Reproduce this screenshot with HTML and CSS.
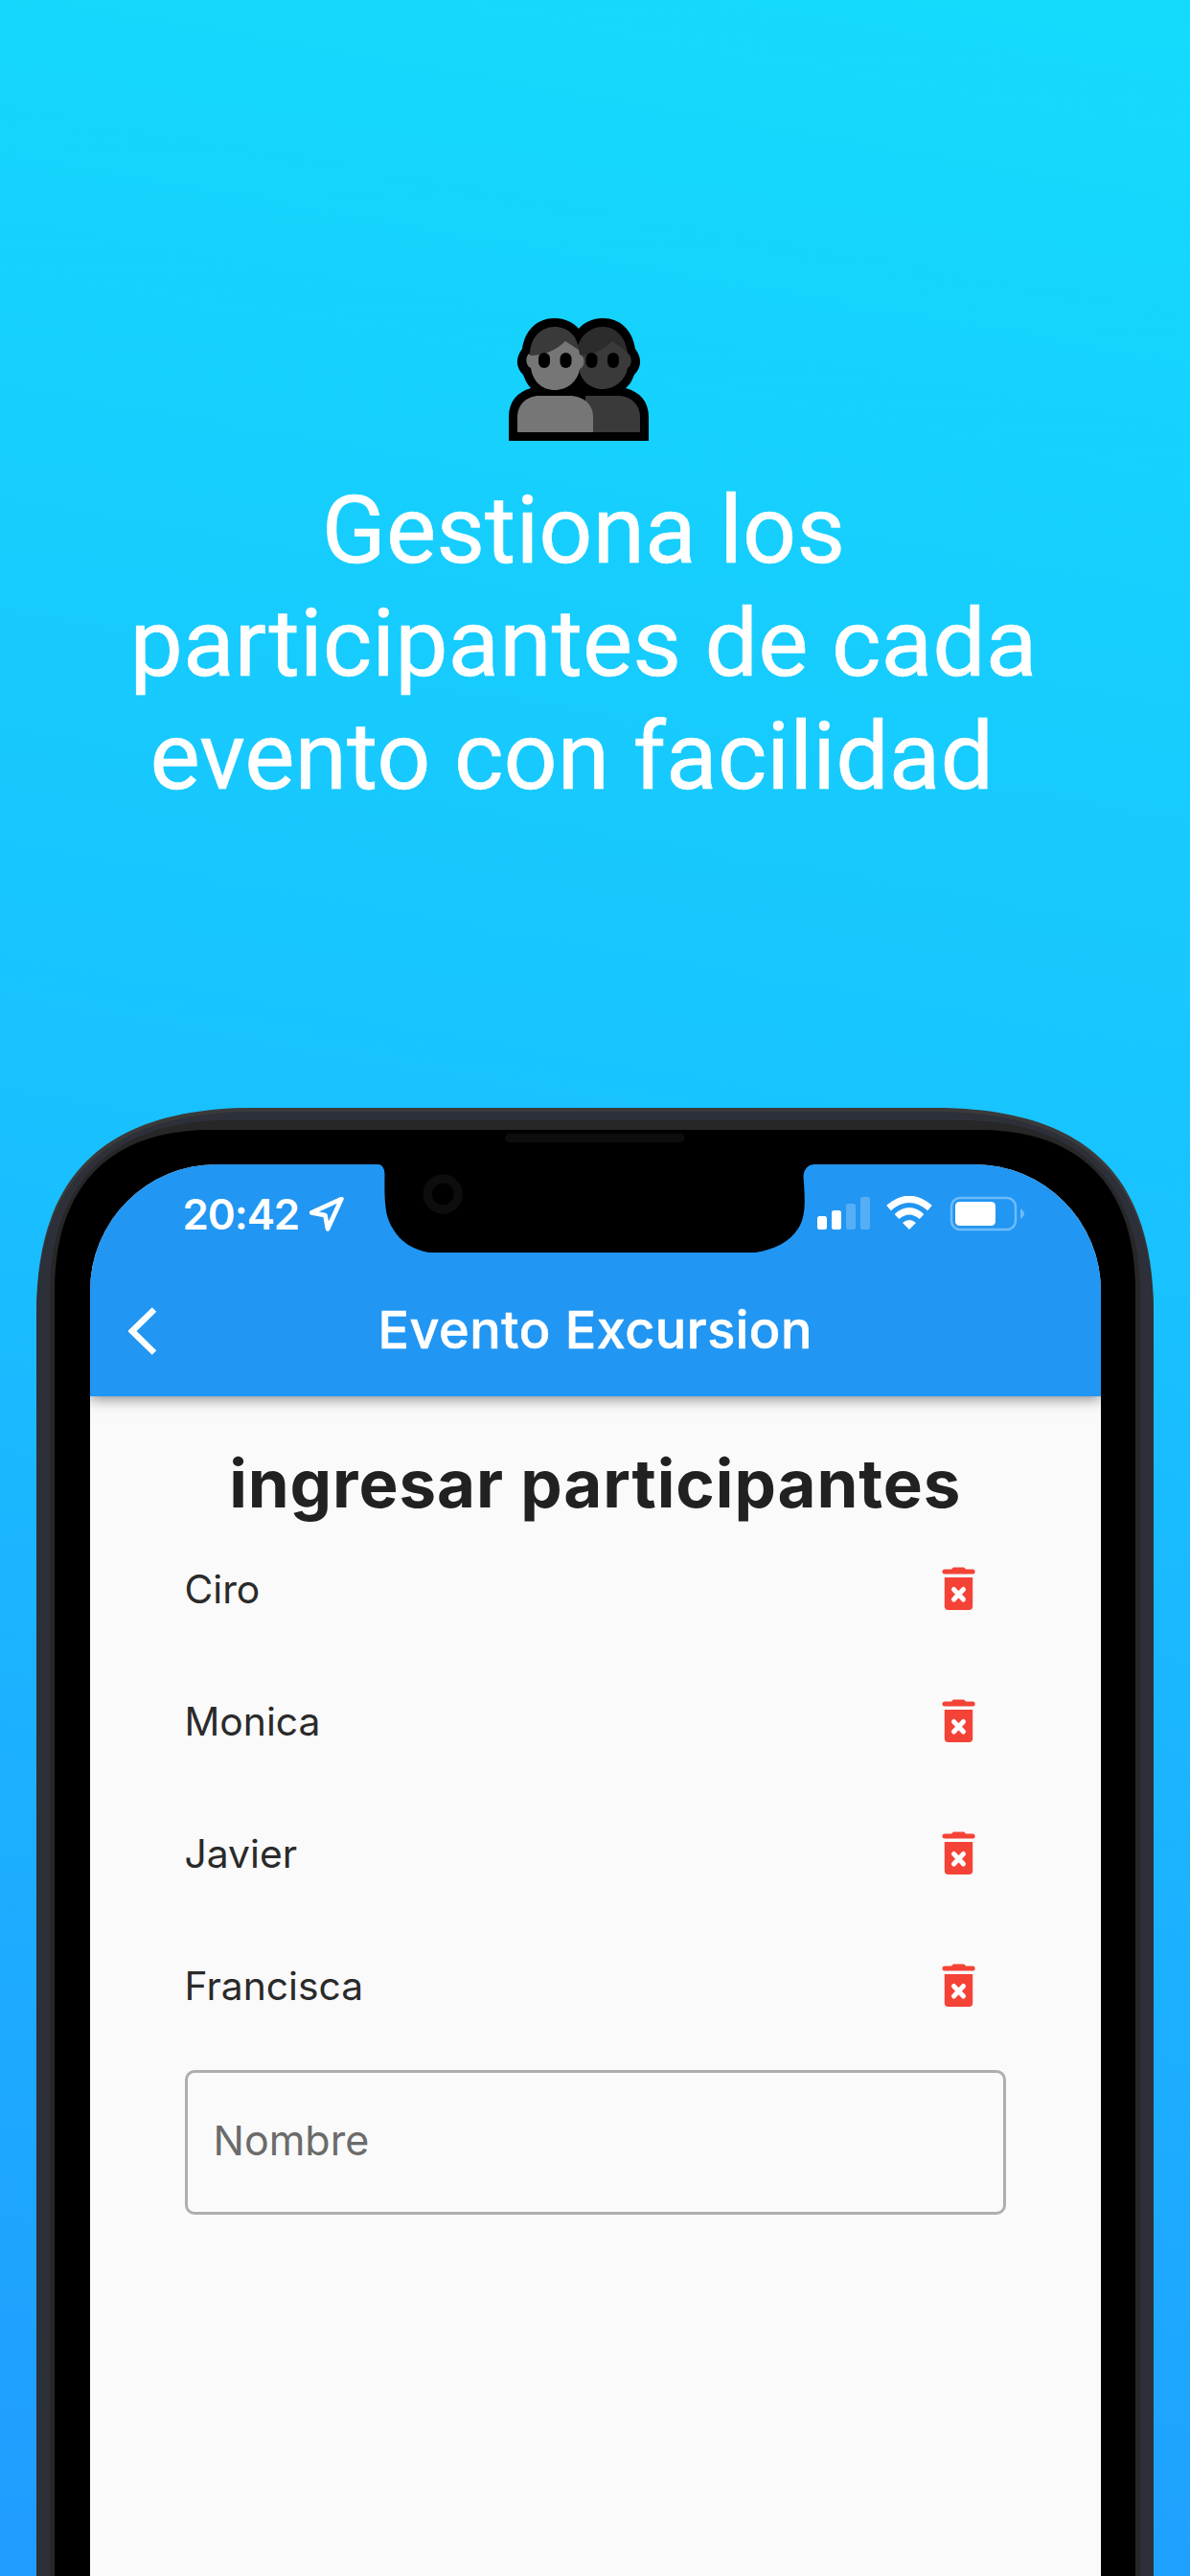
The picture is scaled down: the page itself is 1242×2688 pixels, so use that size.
FILE: index.html
```html
<!DOCTYPE html>
<html lang="es">
<head>
  <meta charset="UTF-8" />
  <title>Evento Excursion</title>
  <link rel="stylesheet" href="styles.css">
</head>
<body>
  <svg width="0" height="0" class="defs">
    <symbol id="trash" viewBox="0 0 36 46">
      <path d="M3 2.600h7L12 .5h11l2.200 2.100h7a2.500 2.500 0 0 1 0 5H3a2.500 2.500 0 0 1 0-5z" />
      <path d="M2.800 11h29.400v30a4 4 0 0 1-4 4H6.800a4 4 0 0 1-4-4z" />
      <path d="M12.500 23.500l10 10.500M22.500 23.500l-10 10.500" stroke="#fff" stroke-width="5" stroke-linecap="round" />
    </symbol>
  </svg>

  <header class="hero">
    <svg class="people" viewBox="0 0 146 128">
      <path d="M0 128v-25c0-16 9-26 23-30-4-4-6-9-8-14-8-8-8-18-1-27C17 12 30 0 48 0c10 0 19 4 25 11C79 4 88 0 98 0c18 0 31 12 34 32 7 9 7 19-1 27-2 5-4 10-9 14 15 4 24 14 24 30v25z" />
      <path fill="#3a3a3a" d="M80 81h34c14 0 23 10 23 22v16H80z" />
      <path fill="#767676" d="M9 119v-16c0-12 9-22 23-22h31c16 0 25 10 25 22v16z" />
      <path fill="#3a3a3a" d="M72 37L108 20l16 15v2c5 1 5 13 0 15-2 13-14 22-26 22S75 66 73 52z" />
      <path fill="#2c2c2c" d="M72 39v-10C76 16 87 9 98 9c13 0 24 10 26 27L108 24C99 33 86 39 72 39z" />
      <path fill="#767676" d="M22 37L59 22l14 11 1 5c6 1 6 13 0 15-2 13-13 22-26 22S25 66 23 52c-6-2-6-14-1-15z" />
      <path fill="#3a3a3a" d="M22 39C22 21 33 9 48 9c13 0 24 9 25 24L59 24C50 33 37 39 22 39z" />
      <g>
        <rect x="31" y="36" width="12" height="16" rx="6" /><rect x="53.500" y="36" width="12" height="16" rx="6" />
        <rect x="80.500" y="36" width="12" height="16" rx="6" /><rect x="103" y="36" width="12" height="16" rx="6" />
      </g>
    </svg>
    <h1>Gestiona los<br>participantes de cada<br>evento con facilidad&nbsp;</h1>
  </header>

  <main class="phone">
    <!-- marco del telefono -->
    <svg class="frame" viewBox="0 0 1166 1532">
      <path fill="#3a3a3a" d="M0 1532V214C0 68 73 0 229 0H937C1093 0 1166 68 1166 214V1532z" />
      <path fill="#2d3039" d="M0 1532V218C0 68 80 4 229 4H937C1086 4 1166 68 1166 218V1532z" />
      <path fill="#272727" d="M14 1532V194C14 74 84 13 200 13H966C1082 13 1152 74 1152 194V1532z" />
      <path d="M19 1532V191C19 79 79 23 182 23H984C1087 23 1147 79 1147 191V1532z" />
    </svg>

    <div class="screen">
      <div class="top">
        <div class="status">
          <span class="time">20:42</span>
          <svg class="arrow" viewBox="0 0 34 34"><path d="M31.500 2L2 15.500l13.500 2.500L18 31.500z" /></svg>
          <svg class="signals" viewBox="0 0 220 38">
            <g fill="#fff">
              <rect x="1" y="21" width="10" height="14" rx="2.500" />
              <rect x="16" y="15" width="10" height="20" rx="2.500" />
              <rect x="31" y="8" width="10" height="27" rx="2.500" opacity=".24" />
              <rect x="46" y="1" width="10" height="34" rx="2.500" opacity=".24" />
            </g>
            <g fill="none" stroke="#fff" stroke-width="7">
              <path d="M75.500 12.500Q97-6 118.500 12.500" />
              <path d="M84 21.500Q97 10 110 21.500" />
            </g>
            <path fill="#fff" d="M90 28Q97 22 104 28L97 35z" />
            <rect x="141" y="2" width="67" height="33" rx="9" fill="none" stroke="#6dbcfa" stroke-width="2.500" />
            <rect x="145" y="6" width="42" height="25" rx="4.500" fill="#fff" />
            <path fill="#6dbcfa" d="M213 13q8 5.500 0 11z" />
          </svg>
        </div>
        <div class="appbar">
          <svg class="back" viewBox="0 0 30 50"><path d="M27 2.500L4 25l23 22.500" /></svg>
          <span class="title">Evento Excursion</span>
        </div>
      </div>

      <section class="content">
        <h2>ingresar participantes</h2>
        <ul class="list">
          <li><span>Ciro</span><svg><use href="#trash" /></svg></li>
          <li><span>Monica</span><svg><use href="#trash" /></svg></li>
          <li><span>Javier</span><svg><use href="#trash" /></svg></li>
          <li><span>Francisca</span><svg><use href="#trash" /></svg></li>
        </ul>
        <input type="text" class="name" placeholder="Nombre" />
      </section>
    </div>

    <!-- notch, camara y altavoz -->
    <svg class="notch" viewBox="0 0 480 150">
      <path d="M0 36V34.700H14Q21 35 21.500 45C21 75 22 90 30 102C38 116 51 124 68 127H408C428 124 444 116 453 102C462 88 460 70 458.500 47Q459 36 470 34.700H480V30H0z" />
      <rect x="147" y="2.500" width="187.500" height="9.500" rx="4.700" fill="#0d0d0d" />
      <circle cx="82.200" cy="66" r="16" fill="none" stroke="#0d0d0d" stroke-width="9.300" />
    </svg>
  </main>
</body>
</html>
```

FILE: styles.css
```css
* { box-sizing: border-box; }
body {
  margin: 0;
  width: 1242px;
  height: 2688px;
  overflow: hidden;
  background: linear-gradient(190deg, #14dbfc 0%, #18c4ff 42%, #209cff 100%);
  font-family: Inter, "Liberation Sans", sans-serif;
}
.defs { position: absolute; }

.hero { height: 1156px; padding-top: 332px; text-align: center; }
.people { display: block; width: 146px; height: 128px; margin-left: 531px; }
h1 {
  margin: 35px 0 0;
  padding-right: 24px;
  color: #fff;
  font: 400 98.600px/118px Roboto, sans-serif;
  -webkit-text-stroke: .6px #fff;
}

.phone { position: relative; width: 1166px; height: 1532px; margin-left: 38px; padding: 58.700px 55px 0 55.500px; }
.frame { position: absolute; left: 0; top: 0; width: 1166px; height: 1532px; }
.screen {
  position: relative;
  height: 1474px;
  background: #fafafa;
  border-radius: 132px 132px 0 0;
  overflow: hidden;
}
.notch { position: absolute; left: 342px; top: 24px; width: 480px; height: 150px; }

.top { height: 242.600px; background: #2196f3; box-shadow: 0 2px 14px rgba(0, 0, 0, .5); color: #fff; }
.status { display: flex; align-items: center; height: 104px; padding: 0 77px 0 97px; }
.time { font-size: 44px; font-weight: 600; letter-spacing: -1.100px; }
.arrow { width: 36px; height: 36px; margin-left: 11px; fill: none; stroke: #fff; stroke-width: 4.500; stroke-linejoin: round; }
.signals { width: 220px; height: 38px; margin-left: auto; }
.appbar { position: relative; display: flex; align-items: center; justify-content: center; height: 138px; }
.back { position: absolute; left: 40px; top: 45px; width: 30px; height: 50px; fill: none; stroke: #fff; stroke-width: 6.500; }
.title { font-size: 54px; font-weight: 500; letter-spacing: .5px; -webkit-text-stroke: .6px #fff; }

.content { padding: 50px 99px 0 99px; }
h2 { margin: 0; font-size: 69px; line-height: 83px; letter-spacing: .9px; text-align: center; white-space: nowrap; color: #212121; }
.list { list-style: none; margin: -1px 0 19px; padding: 0; }
.list li {
  display: flex;
  align-items: center;
  justify-content: space-between;
  height: 138px;
  padding-right: 31px;
  color: #2a2a2a;
  font-size: 40.800px;
}
.list svg { width: 36px; height: 46px; fill: #f44336; }
.name {
  display: block;
  width: 100%;
  height: 151px;
  padding: 0 27px 5px;
  border: 3px solid #aeaeae;
  border-radius: 10px;
  background: none;
  font: 400 43px Inter, sans-serif;
}
.name::placeholder { color: #6b6b6b; }
```
